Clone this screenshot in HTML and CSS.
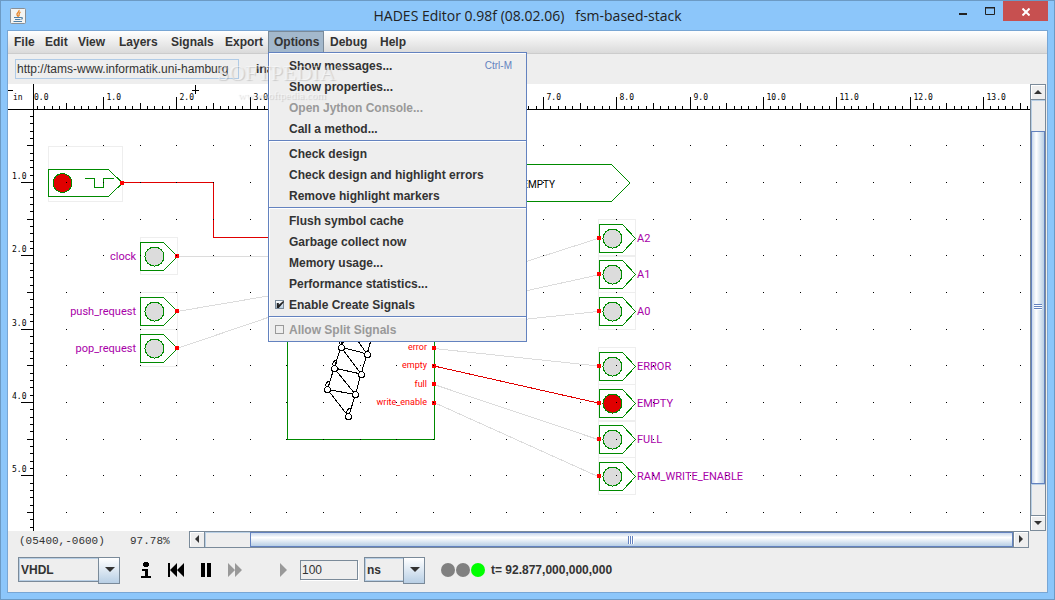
FILE: index.html
```html
<!DOCTYPE html>
<html lang="en">
<head>
<meta charset="utf-8">
<title>HADES Editor</title>
<link rel="stylesheet" href="styles.css">
</head>
<body>
<div class="window">
  <header class="titlebar">
    <svg class="app-icon" width="16" height="16" viewBox="0 0 16 16" aria-hidden="true">
      <rect x=".5" y=".5" width="15" height="15" rx="1" fill="#f4f4f2" stroke="#8a8f94"/>
      <path d="M9 2C10 4 6 5 7 7L8.500 9M10.500 4C8 5.500 9.500 6.500 9 8" fill="none" stroke="#e8862a" stroke-width="1.300"/>
      <path d="M4 9.500H11M5 11.500H10.500M3.500 13.500H12M11 9.500Q13.500 9.500 11.500 11.500" fill="none" stroke="#4f7fa6" stroke-width="1.200"/>
    </svg>
    <h1 class="title">HADES Editor 0.98f (08.02.06)   fsm-based-stack</h1>
    <div class="window-buttons">
      <button class="win-btn" aria-label="Minimize"><svg width="8" height="14"><path d="M0 11H8V13H0Z" fill="#222"/></svg></button>
      <button class="win-btn" aria-label="Maximize"><svg width="10" height="14"><path d="M.5 5V12.500H9.500V5M0 5.500H10M0 6H10" fill="none" stroke="#222"/></svg></button>
      <button class="win-btn close" aria-label="Close"><svg width="8" height="8"><path d="M.5 .5L7.500 7.500M7.500 .5L.5 7.500" stroke="#fff" stroke-width="2"/></svg></button>
    </div>
  </header>

  <main class="content">
    <nav class="menubar">
      <button class="menu">File</button>
      <button class="menu">Edit</button>
      <button class="menu">View</button>
      <button class="menu">Layers</button>
      <button class="menu">Signals</button>
      <button class="menu">Export</button>
      <div class="menu-holder">
        <button class="menu open">Options</button>
        <div class="popup">
          <button class="item">Show messages...<span class="key">Ctrl-M</span></button>
          <button class="item">Show properties...</button>
          <button class="item" disabled>Open Jython Console...</button>
          <button class="item">Call a method...</button>
          <hr class="sep">
          <button class="item">Check design</button>
          <button class="item">Check design and highlight errors</button>
          <button class="item">Remove highlight markers</button>
          <hr class="sep">
          <button class="item">Flush symbol cache</button>
          <button class="item">Garbage collect now</button>
          <button class="item">Memory usage...</button>
          <button class="item">Performance statistics...</button>
          <label class="item check"><input class="tick" type="checkbox" checked>Enable Create Signals</label>
          <hr class="sep">
          <label class="item check off"><input class="tick" type="checkbox" disabled>Allow Split Signals</label>
        </div>
      </div>
      <button class="menu">Debug</button>
      <button class="menu">Help</button>
    </nav>

    <div class="location">
      <input class="url" type="text" aria-label="Design URL" value="http://tams-www.informatik.uni-hamburg">
      <span class="state">ina</span>
    </div>

    <div class="workspace">
      <div class="canvas">
        <svg id="schematic" class="schematic" role="img" aria-label="Schematic">
          <defs>
            <g id="lamp-in">
              <path class="bbox" d="M140.500-18.500H177.500V18.500H140.500Z"/>
              <path class="outline" d="M140.500-13.500H163.500L177.500.5L163.500 14.500H140.500Z"/>
              <circle class="lamp" cx="154.500" cy=".5" r="9.500"/>
              <path class="pin" d="M175-2H179V2H175Z"/>
            </g>
            <g id="lamp-out">
              <path class="bbox" d="M598.500-18.500H635.500V18.500H598.500Z"/>
              <path class="outline" d="M599.500-13.500H622.500L635.500.5L622.500 14.500H599.500Z"/>
              <circle class="lamp" cx="612.500" cy=".5" r="9.500"/>
              <path class="pin" d="M597-2H601V2H597Z"/>
            </g>
          </defs>
          <g transform="translate(-8 -84)">
            <g class="wires">
              <path d="M177 256.500H288M177 311.500L268 296L288 293M177 348.500L268 317.500L288 311"/>
              <path d="M434 291L598 238.500M434 311L598 275M434 329L598 311.500"/>
              <path d="M434 348.500L598 366M434 384.500L598 439.500M434 402.500L598 476.500"/>
              <path class="live" d="M122 182.500H213.500V237.500H288M434 366L598 403"/>
            </g>
            <path class="bbox" d="M48.500 146.500H122.500V201.500H48.500Z"/>
            <path class="outline" d="M48.500 169.500H108.500L122.500 183L108.500 196.500H48.500Z"/>
            <circle class="lamp lit" cx="62.500" cy="183" r="9.500"/>
            <path class="outline" d="M85 178.500H94.500V187.500H103.500V178.500H114"/>
            <path class="pin" d="M120 181H124V185H120Z"/>
            <path class="outline" d="M500 164.500H611.500L630 183L611.500 201.500H500"/>
            <text class="fsm-state" x="555" y="188" text-anchor="end">EMPTY</text>
            <path class="outline" d="M287.500 300V439.500H434.500V300"/>
            <g class="helix">
              <path d="M343 338L341 347L367 354L371 340M358 341L367 354L361 374L334 368L341 347L361 374L355.500 394.500L327.500 389.500L334 368L355.500 394.500L348.500 416.500L327.500 389.500"/>
              <circle cx="341.500" cy="347.500" r="3"/><circle cx="367.500" cy="354.500" r="3"/>
              <circle cx="334.500" cy="368.500" r="3"/><circle cx="361.500" cy="374.500" r="3"/>
              <circle cx="327.500" cy="389.500" r="3"/><circle cx="355.500" cy="394.500" r="3"/>
              <circle cx="348.500" cy="416.500" r="3"/>
              <path d="M336 360Q332 362 333 365Q337 366 336 362M329 381Q325 383 326 386Q330 387 329 383M350 408Q346 410 347 413Q351 414 350 410M342 339Q339 341 340 344Q344 345 343 341"/>
            </g>
            <path class="pin" d="M432 346H436V350H432ZM432 364H436V368H432ZM432 382H436V386H432ZM432 401H436V405H432Z"/>
            <g class="port-names" text-anchor="end">
              <text x="427" y="350">error</text>
              <text x="427" y="368">empty</text>
              <text x="427" y="387">full</text>
              <text x="427" y="405">write_enable</text>
            </g>
            <use href="#lamp-in" y="256"/><use href="#lamp-in" y="311"/><use href="#lamp-in" y="348"/>
            <use href="#lamp-out" y="238"/><use href="#lamp-out" y="274"/><use href="#lamp-out" y="311"/>
            <use href="#lamp-out" y="366"/><use class="lit" href="#lamp-out" y="403"/>
            <use href="#lamp-out" y="439"/><use href="#lamp-out" y="476"/>
            <g class="names" text-anchor="end">
              <text x="136" y="260">clock</text>
              <text x="136" y="315">push_request</text>
              <text x="136" y="352">pop_request</text>
            </g>
            <g class="names">
              <text x="637" y="242">A2</text>
              <text x="637" y="278">A1</text>
              <text x="637" y="315">A0</text>
              <text x="637" y="370">ERROR</text>
              <text x="637" y="407">EMPTY</text>
              <text x="637" y="443">FULL</text>
              <text x="637" y="480">RAM_WRITE_ENABLE</text>
            </g>
            <path id="grid" class="grid"/>
            <path id="ruler" class="ruler"/>
            <path class="ruler" d="M8 90.500H13M192 90.500H199M195.500 85V94"/>
            <text class="ruler-text" x="13" y="100">in</text>
            <g id="ruler-text" class="ruler-text"></g>
          </g>
        </svg>
      </div>
      <div class="scroll vertical">
        <button class="arrow" aria-label="Scroll up"><svg width="8" height="4"><path d="M0 4L4 0L8 4Z"/></svg></button>
        <div class="track"><i class="before"></i><i class="thumb"></i><i class="after"></i></div>
        <button class="arrow" aria-label="Scroll down"><svg width="8" height="4"><path d="M0 0H8L4 4Z"/></svg></button>
      </div>
    </div>

    <div class="status">
      <span class="coords">(05400,-0600)</span>
      <span class="zoom">97.78%</span>
      <div class="scroll horizontal">
        <button class="arrow" aria-label="Scroll left"><svg width="4" height="8"><path d="M4 0V8L0 4Z"/></svg></button>
        <div class="track"><i class="before"></i><i class="thumb"></i></div>
        <button class="arrow" aria-label="Scroll right"><svg width="4" height="8"><path d="M0 0V8L4 4Z"/></svg></button>
      </div>
    </div>

    <div class="controls">
      <span class="combo language"><select aria-label="Simulator"><option>VHDL</option></select></span>
      <div class="transport">
        <button class="tool" aria-label="Info"><svg width="10" height="16"><path d="M3 0H7V1H8V4H7V5H3V4H2V1H3ZM1 7H7V14H10V16H0V14H4V9H1Z"/></svg></button>
        <button class="tool" aria-label="Rewind"><svg width="16" height="14"><path d="M0 0H2V14H0ZM9 0V14L2 7ZM16 0V14L9 7Z"/></svg></button>
        <button class="tool" aria-label="Pause"><svg width="10" height="14"><path d="M0 0H4V14H0ZM6 0H10V14H6Z"/></svg></button>
        <button class="tool" aria-label="Run" disabled><svg width="14" height="14"><path d="M0 0L7 7L0 14ZM7 0L14 7L7 14Z"/></svg></button>
      </div>
      <button class="tool step" aria-label="Step" disabled><svg width="7" height="14"><path d="M0 0L7 7L0 14Z"/></svg></button>
      <input class="amount" type="text" aria-label="Step time" value="100">
      <span class="combo unit"><select aria-label="Time unit"><option>ns</option></select></span>
      <svg class="lights" width="44" height="14" aria-hidden="true">
        <circle cx="7" cy="7" r="7" fill="#808080"/><circle cx="22" cy="7" r="7" fill="#808080"/><circle cx="37" cy="7" r="7" fill="#0f0"/>
      </svg>
      <output class="time">t= 92.877,000,000,000</output>
    </div>
    <div class="watermark" aria-hidden="true">
      <span class="mark-name">SOFTPEDIA<sup>™</sup></span>
      <span class="mark-site">www.softpedia.com</span>
    </div>
  </main>
</div>
<script src="rulers.js"></script>
</body>
</html>
```

FILE: styles.css
```css
* { box-sizing: border-box; }
body {
  margin: 0;
  font: bold 12px "Liberation Sans", Arial, sans-serif;
  color: #333;
}
button, input, select { font: inherit; color: inherit; margin: 0; }
button { border: 0; padding: 0; background: none; }
svg { display: block; }

.window {
  height: 100vh;
  display: flex;
  flex-direction: column;
  padding: 0 6px 6px;
  border: 1px solid #6c9ac4;
  background: #8cc6fa;
}
.titlebar {
  height: 29px;
  display: grid;
  grid-template-columns: 1fr auto 1fr;
  align-items: center;
}
.app-icon { margin-left: 3px; }
.title {
  margin: 0;
  font: 14px/28px "Open Sans", "Noto Sans", sans-serif;
  white-space: pre;
  color: #222;
}
.window-buttons {
  align-self: start;
  display: flex;
  justify-content: flex-end;
}
.win-btn {
  width: 27px;
  height: 20px;
  display: flex;
  justify-content: center;
}
.win-btn svg { margin-top: 1px; }
.close { width: 45px; background: #c75050; align-items: center; }
.close svg { margin: 2px 0 0; }

.content {
  position: relative;
  flex: 1;
  min-height: 0;
  display: flex;
  flex-direction: column;
  border: 1px solid #78a6d4;
  background: #eee;
}
.menubar {
  display: grid;
  grid-template-columns: 31px 33px 41px 52px 54px 49px 56px 50px 1fr;
  height: 23px;
  border-bottom: 1px solid #ccc;
  background: linear-gradient(#fff, #dadada);
}
.menu {
  height: 22px;
  padding-left: 6px;
  line-height: 22px;
  text-align: left;
}
.menu-holder { position: relative; }
.open {
  width: 100%;
  padding-left: 5px;
  border: 1px solid #7a8a99;
  border-bottom: 0;
  line-height: 21px;
  background: #a3b8cc;
}
.popup {
  position: absolute;
  z-index: 2;
  top: 21px;
  left: 0;
  width: 259px;
  padding: 2px 0 1px;
  border: 1px solid #6382bf;
  background: #eee;
  box-shadow: inset 1px 1px #fff;
}
.item {
  display: flex;
  align-items: center;
  width: 100%;
  height: 21px;
  padding: 0 14px 0 20px;
  text-align: left;
}
.item:disabled, .off { color: #999; }
.key { margin-left: auto; font-size: 10px; font-weight: normal; color: #6382bf; }
.sep {
  height: 2px;
  margin: 1px 0;
  border: 0;
  border-top: 1px solid #6382bf;
  background: #fff;
}
.check { padding-left: 6px; }
.tick {
  appearance: none;
  width: 9px;
  height: 9px;
  margin-right: 5px;
  border: 1px solid #999;
}
.tick:checked {
  border-color: #7a8a99;
  background: linear-gradient(#fff, #b8cfe5);
}
.tick:checked::before {
  content: "";
  display: block;
  width: 8px;
  height: 7px;
  background: #222;
  clip-path: polygon(10% 30%, 35% 30%, 35% 55%, 90% 0, 100% 15%, 35% 100%, 10% 100%);
}

.location {
  display: flex;
  align-items: center;
  gap: 17px;
  height: 30px;
  padding: 0 7px;
}
.url {
  width: 224px;
  height: 20px;
  padding: 0 1px;
  border: 1px solid #b0cbe6;
  background: #eee;
  font-weight: normal;
}

.workspace { flex: 1; min-height: 0; display: flex; padding-right: 1px; }
.canvas { flex: 1; min-width: 0; background: #fff; }
.schematic { width: 100%; height: 100%; overflow: hidden; shape-rendering: crispEdges; }
.bbox { fill: none; stroke: #eee; }
.outline { fill: none; stroke: #008a00; }
.lamp { fill: var(--lamp, #dcdcdc); stroke: #008a00; }
.lit { --lamp: #e00000; }
.pin { fill: #f00; }
.wires { fill: none; stroke: #dcdcdc; }
.live { stroke: #e00000; }
.helix { fill: none; stroke: #000; }
.helix circle { fill: #fff; }
.names { font: 11px Roboto, sans-serif; fill: #a800a8; }
.port-names { font: 9px Roboto, sans-serif; fill: #f00; }
.fsm-state { font: 10px Roboto, sans-serif; fill: #000; }
.ruler { fill: none; stroke: #000; }
.grid { fill: #000; }
.ruler-text { font: 8px "DejaVu Sans Mono", monospace; fill: #000; }

.scroll { display: flex; background: #eee; }
.track { flex: 1; display: flex; }
.vertical, .vertical .track { flex-direction: column; }
.vertical { width: 16px; border: 1px solid #7a8a99; }
.horizontal { flex: 1; height: 17px; margin-right: 18px; border: 1px solid #7a8a99; }
.arrow {
  flex: none;
  width: 14px;
  height: 14px;
  display: flex;
  align-items: center;
  justify-content: center;
  fill: #333;
  box-shadow: inset 1px 1px #fff;
}
.before, .after { box-shadow: inset 1px 1px #b8cfe5; }
.thumb {
  display: flex;
  align-items: center;
  justify-content: center;
  border: 1px solid #6382bf;
}
.thumb::before { content: ""; width: 6px; height: 8px; }
.vertical .thumb::before {
  width: 8px;
  height: 6px;
  background: repeating-linear-gradient(#6382bf 0 1px, #fff 1px 2px);
}
.horizontal .thumb::before {
  background: repeating-linear-gradient(90deg, #6382bf 0 1px, #fff 1px 2px);
}
.vertical .track { border: solid #7a8a99; border-width: 1px 0; }
.horizontal .track { border: solid #7a8a99; border-width: 0 1px; }
.vertical .before { flex: 31; }
.vertical .thumb { flex: 353; background: linear-gradient(90deg, #c8d8ec, #fff 35%, #b8cfe5); }
.vertical .after { flex: 31; }
.horizontal .before { flex: 45; }
.horizontal .thumb { flex: 764; background: linear-gradient(#c8d8ec, #fff 35%, #b8cfe5); }

.status {
  display: flex;
  height: 18px;
  padding-left: 11px;
  font: 11px/20px "Liberation Mono", monospace;
}
.coords { width: 111px; }
.zoom { width: 59px; }

.controls {
  display: flex;
  align-items: center;
  height: 43px;
  padding: 0 10px 2px;
}
.combo { position: relative; display: block; height: 25px; }
.combo select {
  appearance: none;
  width: 100%;
  height: 100%;
  padding: 0 2px;
  border: 1px solid #7a8a99;
  border-radius: 0;
  background: #eee;
  box-shadow: inset 0 0 0 1px #b8cfe5;
}
.combo::before, .combo::after {
  content: "";
  position: absolute;
  pointer-events: none;
}
.combo::before {
  top: 0;
  right: 0;
  width: 20px;
  height: 100%;
  border: 1px solid #7a8a99;
  background: linear-gradient(#fff, #b8cfe5);
}
.combo::after {
  top: 10px;
  right: 5px;
  border: 5px solid transparent;
  border-top-color: #333;
  border-bottom: 0;
}
.language { width: 102px; }
.unit { width: 61px; }
.transport { display: flex; align-items: center; gap: 17px; margin-left: 21px; }
.tool { fill: #000; }
.tool:disabled { fill: #999; }
.step { margin-left: 38px; }
.amount {
  width: 58px;
  height: 20px;
  margin: 0 6px 0 13px;
  padding: 0 1px;
  border: 1px solid #7a8a99;
  background: #eee;
  box-shadow: 1px 1px #fff;
  font-weight: normal;
}
.lights { margin: 0 6px 0 16px; }

.watermark {
  position: absolute;
  z-index: 3;
  top: 24px;
  left: 209px;
  pointer-events: none;
  font-family: "Liberation Serif", serif;
  font-weight: normal;
  color: rgba(255, 255, 255, .5);
  text-shadow: 1px 1px 1px rgba(0, 0, 0, .15);
}
.mark-name { display: block; font-size: 22px; line-height: 28px; }
.mark-name sup { font-size: 9px; }
.mark-site { display: block; padding-left: 21px; font-size: 11px; line-height: 16px; }
```

FILE: rulers.js
```js
// Rulers and snap grid: one inch is 220/3 px at the current zoom level.
const INCH = 220 / 3;
const LEFT = 30, TOP = 109, AXIS_X = 33.5, AXIS_Y = 109.5;
const ORIGIN_X = 8, ORIGIN_Y = 84;

const view = document.getElementById("schematic");
const labels = document.getElementById("ruler-text");

function label(x, y, value) {
  const text = document.createElementNS("http://www.w3.org/2000/svg", "text");
  text.setAttribute("x", x);
  text.setAttribute("y", y);
  text.textContent = value.toFixed(1);
  labels.append(text);
}

const at = (start, n, step) => Math.floor(start + n * step + 0.2);

function draw() {
  const right = ORIGIN_X + view.clientWidth;
  const bottom = ORIGIN_Y + view.clientHeight;
  let ruler = `M8 ${AXIS_Y}H${right}M${AXIS_X} 84V${bottom}`;
  labels.replaceChildren();
  label(34, 100, 0);

  for (let i = 1; at(LEFT, i, INCH / 10) < right; i++) {
    const size = i % 10 === 0 ? 13 : i % 5 === 0 ? 7 : 4;
    const x = at(LEFT, i, INCH / 10) + 0.5;
    ruler += `M${x} ${AXIS_Y}v${-size}`;
    if (i % 10 === 0 && x + 26 < right) label(x + 3, 100, i / 10);
  }
  for (let i = 1; at(TOP, i, INCH / 10) < bottom; i++) {
    const size = i % 10 === 0 ? 13 : i % 5 === 0 ? 7 : 4;
    const y = at(TOP, i, INCH / 10) + 0.5;
    ruler += `M${AXIS_X} ${y}h${-size}`;
    if (i % 10 === 0) label(12, y - 4, i / 10);
  }
  document.getElementById("ruler").setAttribute("d", ruler);

  let dots = "";
  for (let r = 1; at(TOP, r, INCH / 2) < bottom; r++) {
    for (let c = 1; at(LEFT, c, INCH / 2) < right; c++) {
      dots += `M${at(LEFT, c, INCH / 2)} ${at(TOP, r, INCH / 2)}h1v1h-1z`;
    }
  }
  document.getElementById("grid").setAttribute("d", dots);
}

draw();
window.addEventListener("resize", draw);
```
